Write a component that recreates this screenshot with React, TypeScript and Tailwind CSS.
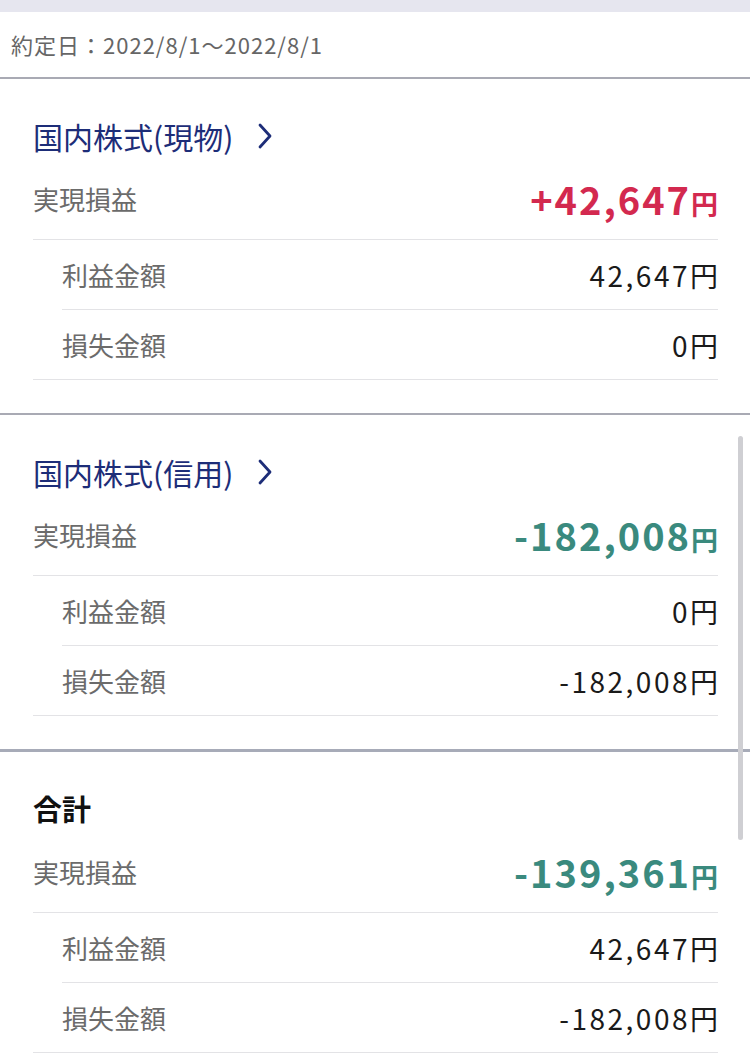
const font = { fontFamily: '"Noto Sans CJK JP", "Noto Sans", sans-serif' };

type Section = {
  title: string;
  link: boolean;
  total: string;
  tone: "up" | "down";
  gain: string;
  loss: string;
};

const sections: Section[] = [
  { title: "国内株式(現物)", link: true, total: "+42,647", tone: "up", gain: "42,647", loss: "0" },
  { title: "国内株式(信用)", link: true, total: "-182,008", tone: "down", gain: "0", loss: "-182,008" },
  { title: "合計", link: false, total: "-139,361", tone: "down", gain: "42,647", loss: "-182,008" },
];

function Chevron() {
  return (
    <svg width="16" height="26" viewBox="0 0 16 26" className="ml-[24px]">
      <path d="M3 2 L13 13 L3 24" fill="none" stroke="#1d2d78" strokeWidth="2.8" strokeLinecap="round" strokeLinejoin="round" />
    </svg>
  );
}

function Block({ s }: { s: Section }) {
  return (
    <div className="pt-[39px] pb-[33px] pl-[33px] pr-[32px]">
      {s.link ? (
        <div className="flex items-center h-[36px] mb-[6px] text-[30px] text-[#1d2d78]">
          <span>{s.title}</span>
          <Chevron />
        </div>
      ) : (
        <div className="flex items-center h-[36px] mb-[6px] text-[29px] font-bold text-[#111]">{s.title}</div>
      )}
      <div className="flex items-center justify-between h-[80px] border-b border-[#e3e3e6] pb-[2px]">
        <span className="text-[26px] text-[#6b6b6b]">実現損益</span>
        <span className={`font-bold ${s.tone === "up" ? "text-[#d3294f]" : "text-[#3a8a7e]"}`}>
          <span className="text-[38px] tracking-[2px]">{s.total}</span>
          <span className="text-[27px]">円</span>
        </span>
      </div>
      <div className="flex items-center justify-between h-[70px] ml-[29px] border-b border-[#e3e3e6]">
        <span className="text-[26px] text-[#6b6b6b]">利益金額</span>
        <span className="text-[28px] text-[#1a1a1a]">
          <span className="tracking-[2.5px]">{s.gain}</span>円
        </span>
      </div>
      <div className="flex items-center justify-between h-[70px] pl-[29px] border-b border-[#e3e3e6]">
        <span className="text-[26px] text-[#6b6b6b]">損失金額</span>
        <span className="text-[28px] text-[#1a1a1a]">
          <span className="tracking-[2.5px]">{s.loss}</span>円
        </span>
      </div>
    </div>
  );
}

export default function App() {
  return (
    <div className="relative w-[750px] h-[1059px] overflow-hidden bg-white" style={font}>
      <div className="h-[12px] bg-[#e6e6ef]" />
      <div className="h-[65px] flex items-center pl-[11px] text-[22px] tracking-[1px] text-[#666]">約定日：2022/8/1〜2022/8/1</div>
      <div className="h-[2px] bg-[#a9aab4]" />
      <Block s={sections[0]} />
      <div className="h-[2px] bg-[#a9aab4]" />
      <Block s={sections[1]} />
      <div className="h-[3px] bg-[#a7abb8]" />
      <Block s={sections[2]} />
      <div className="absolute left-[738px] top-[436px] w-[5px] h-[404px] rounded-full bg-[#cfcfd3]" />
    </div>
  );
}
